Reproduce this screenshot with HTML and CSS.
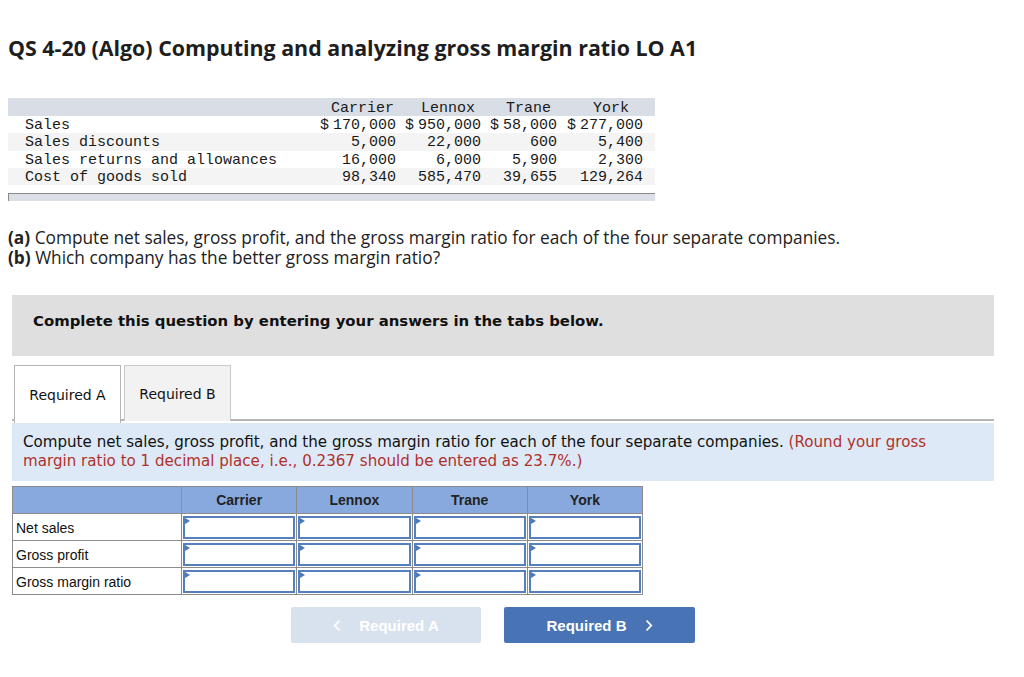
FILE: index.html
```html
<!DOCTYPE html>
<html>
<head>
<meta charset="utf-8">
<link rel="stylesheet" href="styles.css">
</head>
<body>
<div class="page">
  <h1 class="title">QS 4-20 (Algo) Computing and analyzing gross margin ratio LO A1</h1>

  <div class="data">
    <div class="drow head">
      <span class="lbl"></span><span class="hc c1">Carrier</span><span class="hc">Lennox</span><span class="hc">Trane</span><span class="hc c4">York</span>
    </div>
    <div class="drow">
      <span class="lbl">Sales</span><span class="num"><span class="cur">$</span>170,000</span><span class="num"><span class="cur">$</span>950,000</span><span class="num"><span class="cur">$</span>58,000</span><span class="num"><span class="cur">$</span>277,000</span>
    </div>
    <div class="drow alt">
      <span class="lbl">Sales discounts</span><span class="num">5,000</span><span class="num">22,000</span><span class="num">600</span><span class="num">5,400</span>
    </div>
    <div class="drow">
      <span class="lbl">Sales returns and allowances</span><span class="num">16,000</span><span class="num">6,000</span><span class="num">5,900</span><span class="num">2,300</span>
    </div>
    <div class="drow alt">
      <span class="lbl">Cost of goods sold</span><span class="num">98,340</span><span class="num">585,470</span><span class="num">39,655</span><span class="num">129,264</span>
    </div>
    <div class="dfoot"></div>
  </div>

  <div class="q">
    <div class="qline"><b>(a)</b> Compute net sales, gross profit, and the gross margin ratio for each of the four separate companies.</div>
    <div class="qline"><b>(b)</b> Which company has the better gross margin ratio?</div>
  </div>

  <div class="instr">Complete this question by entering your answers in the tabs below.</div>

  <div class="tabs">
    <div class="tab active">Required A</div>
    <div class="tab">Required B</div>
  </div>

  <div class="panel">Compute net sales, gross profit, and the gross margin ratio for each of the four separate companies. <span class="red">(Round your gross</span> <span class="red">margin ratio to 1 decimal place, i.e., 0.2367 should be entered as 23.7%.)</span></div>

  <table class="ans">
    <thead>
      <tr><th class="lblc"></th><th>Carrier</th><th>Lennox</th><th>Trane</th><th>York</th></tr>
    </thead>
    <tbody>
      <tr><td class="lblc">Net sales</td><td class="in"><div class="box"><i class="tri"></i></div></td><td class="in"><div class="box"><i class="tri"></i></div></td><td class="in"><div class="box"><i class="tri"></i></div></td><td class="in"><div class="box"><i class="tri"></i></div></td></tr>
      <tr><td class="lblc">Gross profit</td><td class="in"><div class="box"><i class="tri"></i></div></td><td class="in"><div class="box"><i class="tri"></i></div></td><td class="in"><div class="box"><i class="tri"></i></div></td><td class="in"><div class="box"><i class="tri"></i></div></td></tr>
      <tr><td class="lblc">Gross margin ratio</td><td class="in"><div class="box"><i class="tri"></i></div></td><td class="in"><div class="box"><i class="tri"></i></div></td><td class="in"><div class="box"><i class="tri"></i></div></td><td class="in"><div class="box"><i class="tri"></i></div></td></tr>
    </tbody>
  </table>

  <div class="nav">
    <button class="btn prev"><svg width="8" height="13" viewBox="0 0 8 13"><path d="M6.5 1.5 L1.8 6.5 L6.5 11.5" fill="none" stroke="currentColor" stroke-width="1.8"/></svg><span>Required A</span></button>
    <button class="btn next"><span>Required B</span><svg width="8" height="13" viewBox="0 0 8 13"><path d="M1.5 1.5 L6.2 6.5 L1.5 11.5" fill="none" stroke="currentColor" stroke-width="1.8"/></svg></button>
  </div>
</div>
</body>
</html>
```

FILE: styles.css
```css
* { box-sizing: border-box; }
html, body { margin: 0; padding: 0; background: #fff; }
.page {
  padding: 35px 0 0 8px;
  width: 1024px;
  font-family: "Open Sans", "Liberation Sans", sans-serif;
  color: #222;
}
.title {
  margin: 0;
  font-family: "Open Sans", sans-serif;
  font-weight: 700;
  font-size: 21.4px;
  line-height: 26px;
  color: #1e1e1e;
}
.data {
  margin-top: 37px;
  width: 647px;
  font-family: "Liberation Mono", monospace;
  font-size: 15px;
  color: #1a1a1a;
}
.drow {
  display: grid;
  grid-template-columns: 1fr 67px 85px 76px 86px;
  height: 17.3px;
  line-height: 17px;
  padding: 1px 12px 0 17px;
  white-space: pre;
}
.drow.head { background: #d9dde6; height: 18px; line-height: 17px; padding-top: 2px; }
.drow.alt { background: #f4f4f4; }
.hc { text-align: center; padding-left: 19px; }
.hc.c1 { padding-left: 0; }
.hc.c4 { padding-left: 22px; }
.num { display: flex; justify-content: flex-end; }
.cur { margin-right: 4px; }
.dfoot {
  margin-top: 8px;
  height: 8px;
  background: #dcdfe6;
  border-top: 1px solid #8a8a8a;
  border-left: 1px solid #8a8a8a;
}
.q {
  margin: 27px 0 0 0;
  font-size: 17.3px;
  line-height: 20px;
  color: #222;
}
.qline { height: 20px; }
.q b { font-weight: 700; }
.instr {
  margin: 27px 0 0 4px;
  width: 982px;
  background: #dfdfdf;
  padding: 17px 21px 26px;
  font-family: "DejaVu Sans", sans-serif;
  font-weight: 700;
  font-size: 14.9px;
  line-height: 18px;
  color: #111;
}
.tabs {
  display: flex;
  gap: 3px;
  margin: 9px 0 0 4px;
  width: 982px;
  padding-left: 2px;
  border-bottom: 2px solid #b5b5b5;
  height: 56px;
}
.tab {
  width: 107px;
  height: 56px;
  border: 1px solid #c8c8c8;
  border-bottom: none;
  background: #f2f2f2;
  display: flex;
  align-items: center;
  justify-content: center;
  font-family: "DejaVu Sans", sans-serif;
  font-size: 14px;
  color: #111;
}
.tab.active {
  background: #fff;
  height: 58px;
  border-color: #b5b5b5;
}
.panel {
  margin: 2px 0 0 4px;
  width: 982px;
  background: #dde9f6;
  padding: 10px 22px 10px 11px;
  font-family: "DejaVu Sans", sans-serif;
  font-size: 15.1px;
  line-height: 19px;
  color: #111;
}
.red { color: #b0302a; }
.ans {
  margin: 5px 0 0 4px;
  border-collapse: collapse;
  width: 631px;
  font-family: "Liberation Sans", Arial, sans-serif;
  font-size: 14px;
  color: #111;
  table-layout: fixed;
}
.ans th, .ans td {
  border: 1px solid #8c8c8c;
  padding: 0;
}
.ans th {
  background: #87a9de;
  height: 27px;
  font-weight: 700;
  color: #222;
  text-align: center;
}
.ans th.lblc { width: 169px; }
.ans td { height: 27px; }
.ans td.lblc { padding-left: 3px; padding-top: 1px; }
.ans td.in { padding: 1px; }
.box {
  position: relative;
  height: 23px;
  border: 2px solid #5680bd;
  background: #fff;
}
.tri {
  position: absolute;
  left: 0;
  top: 0;
  width: 0;
  height: 0;
  border-left: 5px solid #4a78b8;
  border-top: 3.5px solid transparent;
  border-bottom: 3.5px solid transparent;
}
.nav {
  display: flex;
  justify-content: center;
  gap: 23px;
  margin: 12px 0 0 4px;
  width: 982px;
  padding-right: 20px;
}
.btn {
  width: 190px;
  height: 36px;
  border: none;
  border-radius: 2px;
  display: flex;
  align-items: center;
  justify-content: center;
  gap: 18px;
  font-family: "Liberation Sans", Arial, sans-serif;
  font-weight: 700;
  font-size: 15px;
  color: #fff;
  padding: 0;
}
.btn.prev { background: #d8e2ef; }
.btn.next { background: #4873b4; width: 191px; }
```
